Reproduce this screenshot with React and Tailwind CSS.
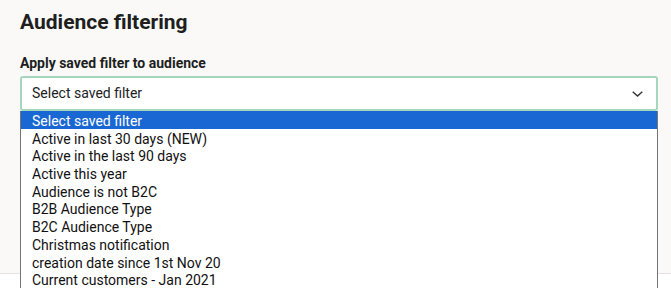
import React from "react";

const options = [
  "Select saved filter",
  "Active in last 30 days (NEW)",
  "Active in the last 90 days",
  "Active this year",
  "Audience is not B2C",
  "B2B Audience Type",
  "B2C Audience Type",
  "Christmas notification",
  "creation date since 1st Nov 20",
  "Current customers - Jan 2021",
];

export default function App() {
  return (
    <div
      className="relative w-[671px] h-[288px] overflow-hidden bg-white"
      style={{ fontFamily: "Roboto, 'Liberation Sans', sans-serif" }}
    >
      <div className="h-[274px] bg-[#faf9f8] border-b border-[#e6e4e2] px-5 pt-[8px]">
        <h1 className="text-[21px] leading-[28px] font-bold text-[#201f1e]">
          Audience filtering
        </h1>
        <div className="mt-[17px] text-[14px] leading-[20px] font-bold text-[#201f1e]">
          Apply saved filter to audience
        </div>
        <div className="relative mt-[3px] w-[638px]">
          <div className="flex items-center justify-between h-[35px] bg-white border-2 border-[#a6d6bd] rounded-[3px] pl-[10px] pr-[13px] text-[14px] text-[#222]">
            <span>Select saved filter</span>
            <svg width="11" height="6" viewBox="0 0 11 6" fill="none">
              <path d="M0.7 0.7 L5.5 5 L10.3 0.7" stroke="#333" strokeWidth="1.4" />
            </svg>
          </div>
          <div className="absolute left-0 top-[35px] w-[638px] bg-white border-x border-[#767676] text-[14px] text-[#111]">
            {options.map((o, i) => (
              <div
                key={o}
                className={
                  i === 0
                    ? "h-[17.7px] leading-[20.5px] pl-[11px] bg-[#1967d2] text-white"
                    : "h-[17.7px] leading-[20.5px] pl-[11px]"
                }
              >
                {o}
              </div>
            ))}
          </div>
        </div>
      </div>
    </div>
  );
}
